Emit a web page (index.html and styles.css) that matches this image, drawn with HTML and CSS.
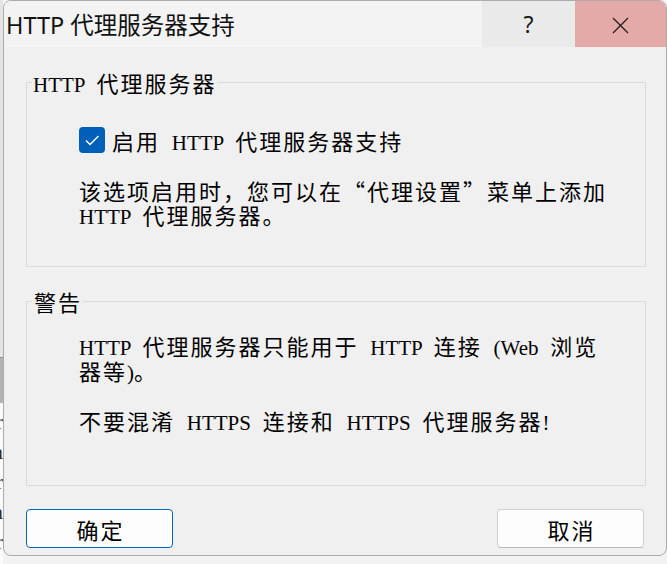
FILE: index.html
```html
<!DOCTYPE html>
<html lang="zh-CN">
<head>
<meta charset="utf-8">
<title>HTTP 代理服务器支持</title>
<link rel="stylesheet" href="styles.css">
</head>
<body>
<div class="desk">
  <div class="behind">
    <div class="behind-top"></div>
    <div class="behind-bar"></div>
    <div class="behind-text">
      <div class="frag">r</div>
      <div class="frag">a</div>
      <div class="frag">r</div>
      <div class="frag">a</div>
      <div class="frag">r</div>
    </div>
  </div>
  <div class="window">
    <div class="titlebar">
      <span class="title">HTTP 代理服务器支持</span>
      <div class="caption-btns">
        <div class="cap help">?</div>
        <div class="cap close">
          <svg width="17" height="17" viewBox="0 0 17 17"><path d="M1 1 L16 16 M16 1 L1 16" stroke="#1a1a1a" stroke-width="1.2" fill="none"/></svg>
        </div>
      </div>
    </div>
    <div class="content">
      <fieldset class="group group-proxy">
        <legend><span class="lat">HTTP </span>代理服务器</legend>
        <div class="group-body">
          <div class="check-row">
            <span class="checkbox">
              <svg width="26" height="26" viewBox="0 0 26 26"><path d="M7 13.5 L11 17.5 L19.5 9" stroke="#fff" stroke-width="1.4" fill="none"/></svg>
            </span>
            <span class="check-label">启用<span class="lat"> HTTP </span>代理服务器支持</span>
          </div>
          <p class="para first">该选项启用时，您可以在“代理设置”菜单上添加<br><span class="lat">HTTP </span>代理服务器。</p>
        </div>
      </fieldset>
      <fieldset class="group group-warn">
        <legend>警告</legend>
        <div class="group-body">
          <p class="para"><span class="lat">HTTP </span>代理服务器只能用于<span class="lat"> HTTP </span>连接<span class="lat"> (Web </span>浏览<br>器等<span class="lat">)</span>。</p>
          <p class="para second">不要混淆<span class="lat"> HTTPS </span>连接和<span class="lat"> HTTPS </span>代理服务器<span class="lat">!</span></p>
        </div>
      </fieldset>
      <div class="buttons">
        <button class="btn primary">确定</button>
        <button class="btn">取消</button>
      </div>
    </div>
  </div>
</div>
</body>
</html>
```

FILE: styles.css
```css
html, body {
  margin: 0;
  padding: 0;
}
body {
  width: 667px;
  height: 564px;
  overflow: hidden;
  background: #f2f2f2;
  font-family: "Noto Sans CJK SC", sans-serif;
  color: #000;
}
.desk {
  display: flex;
  height: 564px;
}
.behind {
  width: 3px;
  flex: none;
  display: flex;
  flex-direction: column;
}
.behind-top {
  height: 357px;
  background: #e4e4e4;
  border-bottom: 1px solid #8f8f8f;
}
.behind-bar {
  height: 45px;
  background: #b3b3b3;
}
.behind-text {
  flex: 1;
  background: #fbfbfb;
  padding-top: 4px;
}
.frag {
  height: 30px;
  display: flex;
  justify-content: flex-end;
  overflow: hidden;
  font-family: "Liberation Serif", serif;
  font-size: 22px;
  line-height: 30px;
  color: #3a2a20;
}
.window {
  flex: 1;
  height: 556px;
  box-sizing: border-box;
  border: 1px solid #ababab;
  border-radius: 8px;
  background: #f0f0f0;
  overflow: hidden;
  display: flex;
  flex-direction: column;
}
.titlebar {
  height: 46px;
  flex: none;
  display: flex;
  align-items: center;
  background: #f3f3f3;
}
.title {
  flex: 1;
  padding-left: 2px;
  font-family: "Noto Sans", "Noto Sans CJK SC", sans-serif;
  font-size: 23.5px;
  color: #111;
  white-space: nowrap;
}
.caption-btns {
  display: flex;
  align-self: stretch;
}
.cap {
  display: flex;
  align-items: center;
  justify-content: center;
}
.help {
  width: 93px;
  background: #eaeaea;
  font-family: "Noto Sans", sans-serif;
  font-size: 23px;
  color: #1a1a1a;
  padding-bottom: 1px;
}
.close {
  width: 91px;
  background: #e4aaa8;
  padding-top: 2px;
}
.content {
  flex: 1;
  padding: 23px 20px 0 22px;
}
.lat {
  font-family: "Liberation Serif", serif;
  font-size: 21px;
  letter-spacing: 0;
  word-spacing: 6.5px;
  white-space: pre;
  line-height: 10px;
}
.group {
  margin: 0;
  border: 1px solid #dadada;
  padding: 0;
  min-width: 0;
  font-size: 22px;
  letter-spacing: 2px;
  line-height: 24px;
}
.group legend {
  padding: 0 1px;
  margin-left: 5px;
  line-height: 24px;
  height: 24px;
  font-size: 22px;
}
.group-body {
  padding-left: 52px;
}
.group-proxy .group-body {
  padding-top: 33px;
  padding-bottom: 40px;
}
.group-warn {
  margin-top: 22px;
}
.group-warn .group-body {
  padding-top: 20px;
  padding-bottom: 52px;
}
.group-warn .para {
  line-height: 25px;
}
.group-warn legend {
  padding-left: 2px;
}
.check-row {
  display: flex;
  align-items: center;
  height: 26px;
  gap: 7px;
}
.checkbox {
  width: 26px;
  height: 26px;
  border-radius: 4px;
  background: #005fb8;
  display: flex;
  flex: none;
}
.para {
  margin: 0;
  white-space: nowrap;
}
.group-proxy .para.first {
  margin-top: 25px;
}
.para.second {
  margin-top: 25px;
}
.buttons {
  display: flex;
  justify-content: space-between;
  margin-top: 23px;
  padding-right: 2px;
}
.btn {
  width: 147px;
  height: 39px;
  box-sizing: border-box;
  border: 1px solid #d0d0d0;
  border-bottom-color: #b8b8b8;
  border-radius: 4px;
  background: #fdfdfd;
  font-family: "Noto Sans CJK SC", sans-serif;
  font-size: 22px;
  letter-spacing: 2px;
  padding: 0 0 0 2px;
  color: #000;
  line-height: 1;
}
.btn.primary {
  border: 1px solid #0067c0;
}
```
